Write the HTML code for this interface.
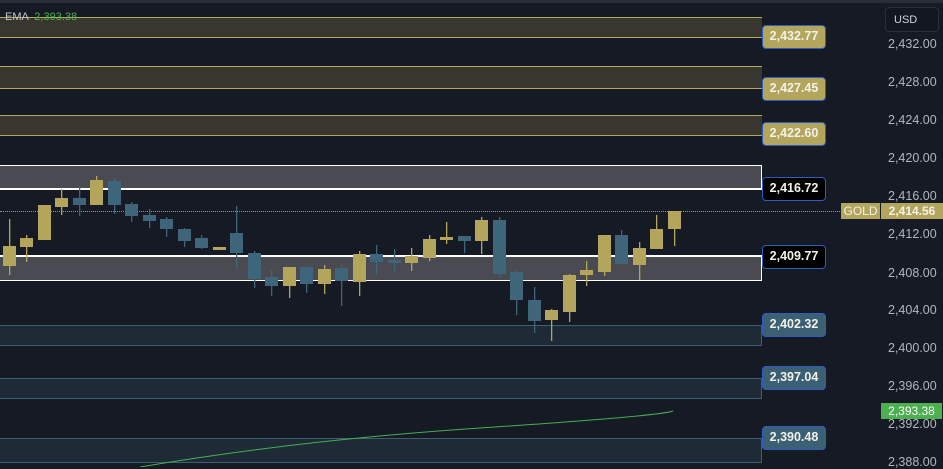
<!DOCTYPE html><html><head><meta charset="utf-8"><style>
body{margin:0;width:943px;height:467px;overflow:hidden;background:#161a25;font-family:"Liberation Sans",sans-serif;position:relative}
.a{position:absolute}
.z{position:absolute;left:0;width:762px;box-sizing:border-box}
.lab{position:absolute;left:762px;width:64px;height:24px;box-sizing:border-box;border:1.5px solid #2f5dc4;border-radius:4px;color:#f2f2ea;font-size:12.5px;font-weight:bold;line-height:21px;text-align:center}
.g{background:#b3a65c}.b{background:#3b5f73}.k{background:#000}
.ax{position:absolute;left:888px;font-size:12.5px;color:#b2b5be}
</style></head><body>
<div class="a" style="left:0;top:0;width:943px;height:3px;background:#2a2e39"></div>
<div class="z" style="top:17px;height:21px;background:#37372f;border-top:1px solid #b5a95a;border-bottom:1px solid #b5a95a"></div>
<div class="z" style="top:66px;height:23px;background:#37372f;border-top:1px solid #b5a95a;border-bottom:1px solid #b5a95a"></div>
<div class="z" style="top:115px;height:21px;background:#37372f;border-top:1px solid #b5a95a;border-bottom:1px solid #b5a95a"></div>
<div class="z" style="top:165px;height:25px;background:#4a4a52;border:1px solid #fff;border-left:0;border-bottom:2px solid #fff"></div>
<div class="z" style="top:255px;height:26px;background:#4a4a52;border:1px solid #fff;border-left:0;border-top:2px solid #fff"></div>
<div class="z" style="top:325px;height:21px;background:#1e2a36;border:1px solid #3d6070;border-left:0"></div>
<div class="z" style="top:378px;height:21px;background:#1e2a36;border:1px solid #3d6070;border-left:0"></div>
<div class="z" style="top:438px;height:25px;background:#1e2a36;border:1px solid #3d6070;border-left:0"></div>
<div class="a" style="left:0;top:211px;width:880px;border-top:1px dotted #9a9470"></div>
<div class="a" style="left:5px;top:11px;font-size:11px;color:#c8c8c8">EMA <span style="color:#4caf50;margin-left:3px">2,393.38</span></div>
<svg class="a" style="left:0;top:0" width="880" height="467">
<path d="M140 467 Q300 440 480 428 T673 411" stroke="#44b050" stroke-width="1" fill="none"/>
</svg>
<svg class="a" style="left:0;top:0" width="760" height="467" id="cs"></svg>
<script>
var d=[[3,246,266,219,275,1],[20,238,247,235,262,1],[38,205,240,205,240,1],[55,198,207,189,215,1],[73,198,205,186,216,0],[90,180,205,176,205,1],[108,181,205,178,214,0],[125,204,216,202,222,0],[143,215,221,209,228,0],[160,219,229,217,237,0],[178,229,241,228,247,0],[195,238,248,235,249,0],[213,247,250,247,250,1],[230,233,253,206,269,0],[248,253,279,251,288,0],[265,277,286,270,296,0],[283,267,286,267,298,1],[300,267,284,267,293,0],[318,269,284,265,294,1],[335,268,281,265,306,0],[353,254,282,251,296,1],[370,254,262,245,275,0],[388,260,263,249,271,0],[405,256,263,248,271,1],[423,239,258,235,261,1],[440,237,240,222,244,1],[458,236,241,236,253,0],[475,220,241,217,254,1],[493,220,274,217,277,0],[510,272,300,270,315,0],[528,300,321,287,333,0],[545,310,320,309,341,1],[563,275,312,274,322,1],[580,270,275,261,286,1],[598,235,272,235,276,1],[615,235,264,230,264,0],[633,248,265,242,280,1],[650,229,249,215,249,1],[668,211,229,211,246,1]];
var s='';d.forEach(function(c){var col=c[5]?'#b3a65c':'#3e6579';s+='<rect x="'+(c[0]+6)+'" y="'+c[3]+'" width="1.3" height="'+(c[4]-c[3])+'" fill="'+col+'"/><rect x="'+c[0]+'" y="'+c[1]+'" width="13" height="'+(c[2]-c[1])+'" fill="'+col+'"/>';});
document.getElementById('cs').innerHTML=s;
</script>
<div class="lab g" style="top:25px">2,432.77</div>
<div class="lab g" style="top:77px">2,427.45</div>
<div class="lab g" style="top:122px">2,422.60</div>
<div class="lab k" style="top:177px">2,416.72</div>
<div class="lab k" style="top:245px">2,409.77</div>
<div class="lab b" style="top:313px">2,402.32</div>
<div class="lab b" style="top:366px">2,397.04</div>
<div class="lab b" style="top:426px">2,390.48</div>
<div class="a" style="left:885px;top:7px;width:54px;height:25px;box-sizing:border-box;border:1px solid #2a2e39;border-radius:4px;background:#131722;color:#d1d4dc;font-size:11px;line-height:24px;padding-left:8px">USD</div>
<div class="ax" style="top:37px">2,432.00</div>
<div class="ax" style="top:75px">2,428.00</div>
<div class="ax" style="top:113px">2,424.00</div>
<div class="ax" style="top:151px">2,420.00</div>
<div class="ax" style="top:189px">2,416.00</div>
<div class="ax" style="top:227px">2,412.00</div>
<div class="ax" style="top:266px">2,408.00</div>
<div class="ax" style="top:303px">2,404.00</div>
<div class="ax" style="top:341px">2,400.00</div>
<div class="ax" style="top:379px">2,396.00</div>
<div class="ax" style="top:417px">2,392.00</div>
<div class="ax" style="top:455px">2,388.00</div>
<div class="a" style="left:841px;top:203px;width:39px;height:16px;background:#b3a65c;color:#f2f2ea;font-size:12px;line-height:16px;text-align:center">GOLD</div>
<div class="a" style="left:881px;top:203px;width:62px;height:16px;background:#b3a65c;color:#f2f2ea;font-size:12px;font-weight:bold;line-height:16px;text-align:center">2,414.56</div>
<div class="a" style="left:881px;top:403px;width:61px;height:16px;background:#4caf50;color:#fff;font-size:12px;line-height:16px;text-align:center">2,393.38</div>
</body></html>
